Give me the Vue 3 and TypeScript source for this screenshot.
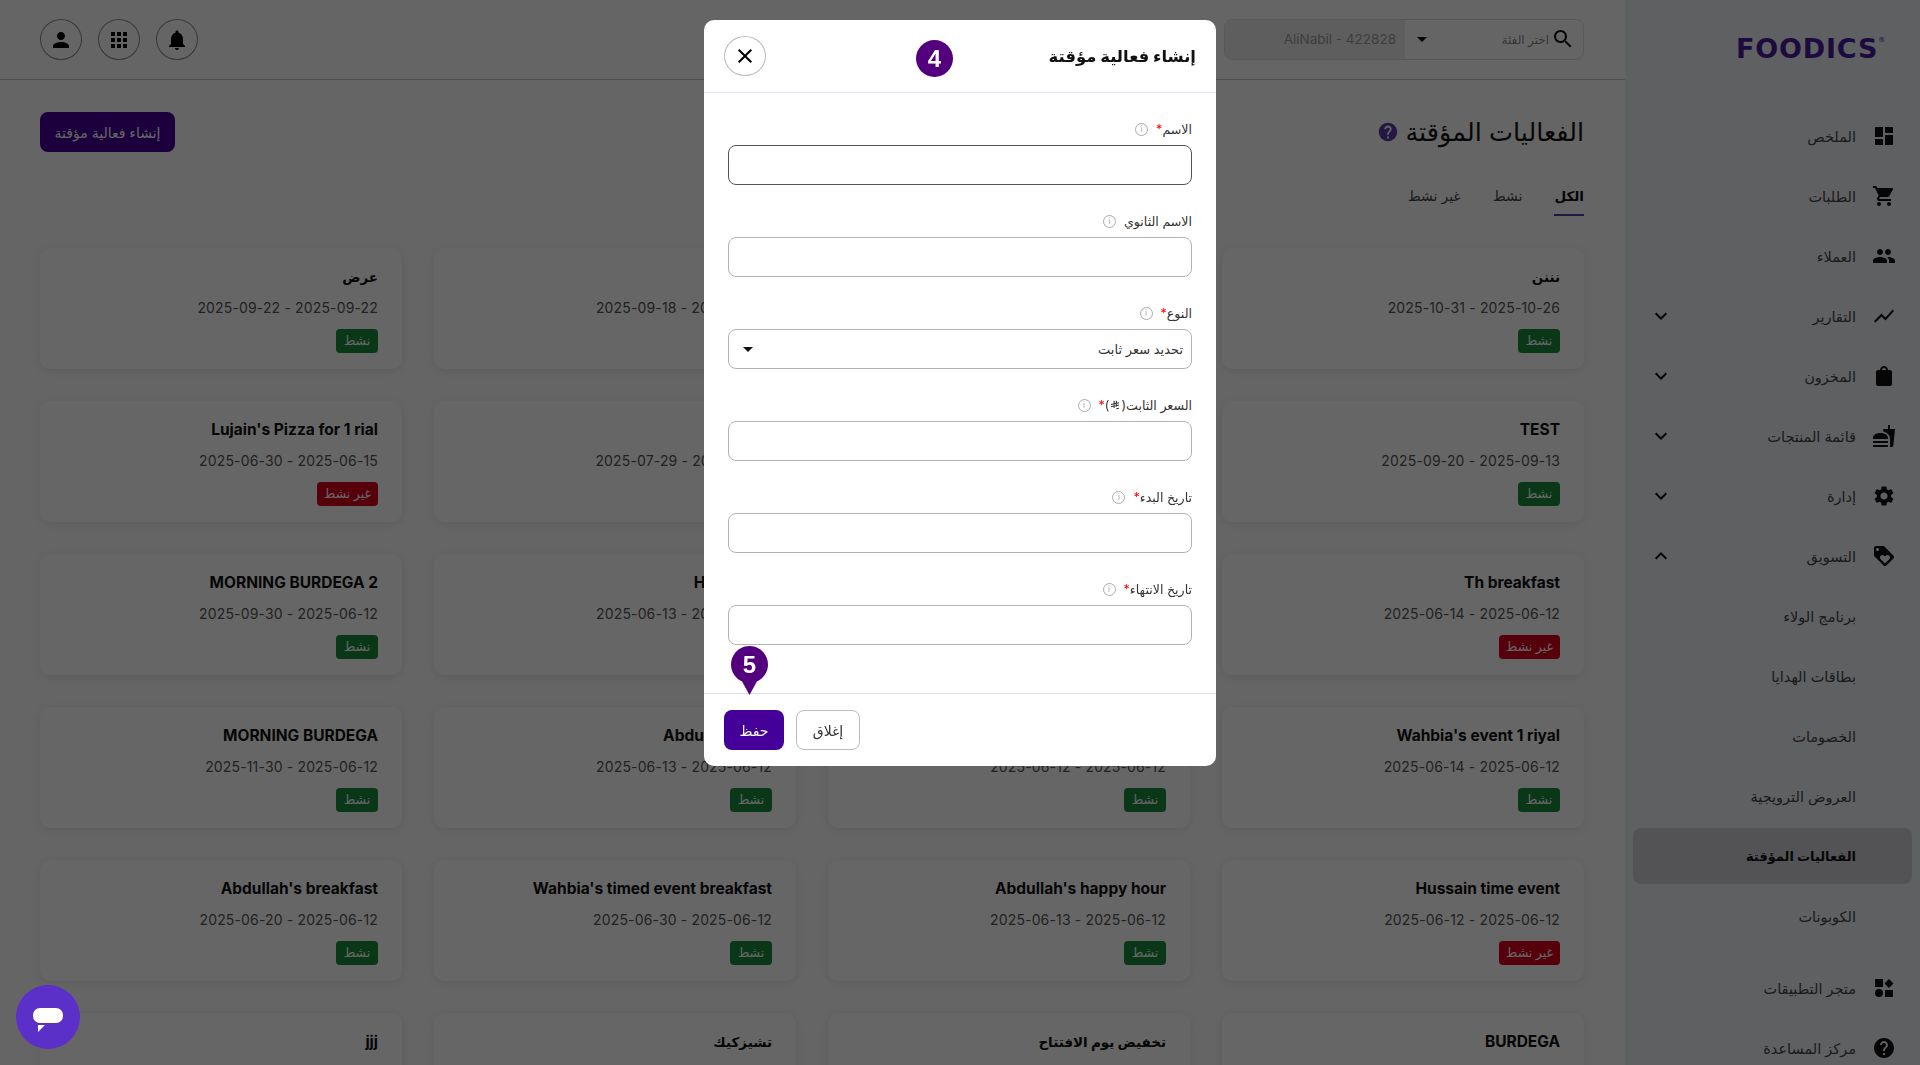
<template>
  <div class="page" dir="rtl">
    <aside class="sidebar">
      <div class="logo" dir="ltr">FOODICS<sup>®</sup></div>
      <nav class="nav">
        <div
          v-for="item in navItems"
          :key="item.label"
          class="nav-item"
          :class="{ active: item.active, 'after-group': item.afterGroup }"
        >
          <span class="nav-icon">
            <svg v-if="item.icon" viewBox="0 0 24 24" width="24" height="24"><path :d="icons[item.icon]" /></svg>
          </span>
          <span class="nav-label">{{ item.label }}</span>
          <svg v-if="item.chevron" class="chevron" viewBox="0 0 24 24" width="24" height="24">
            <path :d="item.chevron === 'up' ? icons.less : icons.more" />
          </svg>
        </div>
      </nav>
    </aside>

    <main class="main">
      <header class="topbar">
        <div class="branch-picker">
          <div class="branch-search">
            <svg viewBox="0 0 24 24" width="24" height="24"><path :d="icons.search" /></svg>
            <span class="branch-hint">اختر الفئة</span>
            <span class="caret"></span>
          </div>
          <div class="branch-value" dir="ltr">AliNabil - 422828</div>
        </div>
        <div class="top-actions">
          <button class="round-btn"><svg viewBox="0 0 24 24" width="24" height="24"><path :d="icons.bell" /></svg></button>
          <button class="round-btn"><svg viewBox="0 0 24 24" width="24" height="24"><path :d="icons.apps" /></svg></button>
          <button class="round-btn"><svg viewBox="0 0 24 24" width="24" height="24"><path :d="icons.person" /></svg></button>
        </div>
      </header>

      <section class="content">
        <div class="title-row">
          <h1>الفعاليات المؤقتة</h1>
          <svg class="title-help" viewBox="0 0 24 24" width="22" height="22"><path :d="icons.help" /></svg>
          <button class="create-btn">إنشاء فعالية مؤقتة</button>
        </div>

        <div class="tabs">
          <span class="tab current">الكل</span>
          <span class="tab">نشط</span>
          <span class="tab">غير نشط</span>
        </div>

        <div class="grid">
          <div v-for="(card, i) in cards" :key="i" class="card">
            <div class="card-title" :class="{ arabic: isArabic(card.title) }">{{ card.title }}</div>
            <div v-if="card.dates" class="card-dates">{{ card.dates }}</div>
            <span v-if="card.dates" class="badge" :class="{ off: !card.on }">{{ card.on ? 'نشط' : 'غير نشط' }}</span>
          </div>
        </div>
      </section>
    </main>

    <div class="overlay">
      <div class="modal">
        <div class="modal-header">
          <h3>إنشاء فعالية مؤقتة</h3>
          <button class="close-x"><svg viewBox="0 0 24 24" width="24" height="24"><path :d="icons.close" /></svg></button>
          <span class="step step-four">4</span>
        </div>

        <div class="modal-body">
          <div v-for="field in fields" :key="field.label" class="field">
            <div class="field-label">
              <span>{{ field.label }}</span>
              <svg v-if="field.riyal" class="riyal" viewBox="0 0 12 12" width="10" height="10">
                <path d="M5 1v8.5M7.6 .8v7.4M1.2 5.4l9.6-2M1.2 8l9.6-2M7.6 10.6l3.2-.7" />
              </svg>
              <span v-if="field.riyal">)</span>
              <span v-if="field.required" class="req">*</span>
              <span class="info">i</span>
            </div>
            <div class="input" :class="{ focused: field.focused }">
              <template v-if="field.value">
                <span>{{ field.value }}</span>
                <span class="caret"></span>
              </template>
            </div>
          </div>
        </div>

        <div class="modal-footer">
          <button class="btn-light">إغلاق</button>
          <button class="btn-save">حفظ</button>
        </div>

        <div class="step-pin">
          <svg viewBox="0 0 37 49" width="37" height="49"><path d="M18.5 0C8.3 0 0 8.3 0 18.5c0 7.600 4.600 14.100 11.100 17L18.500 49l7.400-13.500C32.400 32.600 37 26.100 37 18.500 37 8.300 28.700 0 18.500 0z" /></svg>
          <span>5</span>
        </div>
      </div>
    </div>

    <button class="chat-btn">
      <svg viewBox="0 0 32 32" width="32" height="32">
        <rect x="1" y="7" width="30" height="15" rx="7" fill="#fff" />
        <path d="M6 24h7l-7 7z" fill="#fff" />
      </svg>
    </button>
  </div>
</template>

<script setup lang="ts">
interface NavItem {
  label: string
  icon?: string
  chevron?: 'up' | 'down'
  active?: boolean
  afterGroup?: boolean
}

interface Card {
  title: string
  dates?: string
  on?: boolean
}

interface Field {
  label: string
  required?: boolean
  riyal?: boolean
  focused?: boolean
  value?: string
}

const icons: Record<string, string> = {
  dashboard: 'M3 13h8V3H3v10zm0 8h8v-6H3v6zm10 0h8V11h-8v10zm0-18v6h8V3h-8z',
  cart: 'M7 18c-1.1 0-1.99.9-1.99 2S5.9 22 7 22s2-.9 2-2-.9-2-2-2zM1 2v2h2l3.6 7.59-1.35 2.45c-.16.28-.25.61-.25.96 0 1.1.9 2 2 2h12v-2H7.42c-.14 0-.25-.11-.25-.25l.03-.12.9-1.63h7.45c.75 0 1.41-.41 1.75-1.03l3.58-6.49c.08-.14.12-.31.12-.48 0-.55-.45-1-1-1H5.21l-.94-2H1zm16 16c-1.1 0-1.99.9-1.99 2s.89 2 1.99 2 2-.9 2-2-.9-2-2-2z',
  people: 'M16 11c1.66 0 2.99-1.34 2.99-3S17.66 5 16 5c-1.66 0-3 1.34-3 3s1.34 3 3 3zm-8 0c1.66 0 2.99-1.34 2.99-3S9.66 5 8 5C6.34 5 5 6.34 5 8s1.34 3 3 3zm0 2c-2.33 0-7 1.17-7 3.5V19h14v-2.5c0-2.33-4.67-3.5-7-3.5zm8 0c-.29 0-.62.02-.97.05 1.16.84 1.97 1.97 1.97 3.45V19h6v-2.5c0-2.33-4.67-3.5-7-3.5z',
  chart: 'M3.5 18.49l6-6.01 4 4L22 6.92l-1.41-1.41-7.09 7.97-4-4L2 16.99z',
  bag: 'M18 6h-2c0-2.21-1.79-4-4-4S8 3.79 8 6H6c-1.1 0-2 .9-2 2v12c0 1.1.9 2 2 2h12c1.1 0 2-.9 2-2V8c0-1.1-.9-2-2-2zm-6-2c1.100 0 2 .9 2 2h-4c0-1.100.9-2 2-2z',
  food: 'M18.06 22.99h1.66c.84 0 1.53-.64 1.63-1.46L23 5.05h-5V1h-1.97v4.05h-4.97l.3 2.34c1.71.47 3.31 1.32 4.27 2.26 1.44 1.42 2.43 2.89 2.43 5.29v8.05zM1 21.99V21h15.03v.99c0 .55-.45 1-1.01 1H2.01c-.56 0-1.01-.45-1.01-1zm15.03-7c.5-4-3.25-6-7.53-6-4.28 0-8.03 2-7.53 6h15.06zM1.02 17h15v2h-15z',
  settings: 'M19.14 12.94c.04-.3.06-.61.06-.94 0-.32-.02-.64-.07-.94l2.03-1.58c.18-.14.23-.41.12-.61l-1.92-3.32c-.12-.22-.37-.29-.59-.22l-2.39.96c-.5-.38-1.03-.7-1.62-.94l-.36-2.54c-.04-.24-.24-.41-.48-.41h-3.84c-.24 0-.43.17-.47.41l-.36 2.54c-.59.24-1.13.57-1.62.94l-2.39-.96c-.22-.08-.47 0-.59.22L2.74 8.87c-.12.21-.08.47.12.61l2.03 1.58c-.05.3-.09.63-.09.94s.02.64.07.94l-2.03 1.58c-.18.14-.23.41-.12.61l1.92 3.32c.12.22.37.29.59.22l2.39-.96c.5.38 1.03.7 1.62.94l.36 2.54c.05.24.24.41.48.41h3.84c.24 0 .44-.17.47-.41l.36-2.54c.59-.24 1.13-.56 1.62-.94l2.39.96c.22.08.47 0 .59-.22l1.92-3.32c.12-.22.07-.47-.12-.61l-2.01-1.58zM12 15.6c-1.98 0-3.6-1.62-3.6-3.6s1.62-3.6 3.6-3.6 3.6 1.62 3.6 3.6-1.62 3.6-3.6 3.6z',
  tag: 'M21.41 11.58l-9-9C12.05 2.22 11.55 2 11 2H4c-1.1 0-2 .9-2 2v7c0 .55.22 1.05.59 1.42l9 9c.36.36.86.58 1.41.58.55 0 1.05-.22 1.41-.59l7-7c.37-.36.59-.86.59-1.41 0-.55-.23-1.06-.59-1.42zM5.5 7C4.67 7 4 6.33 4 5.5S4.67 4 5.5 4 7 4.67 7 5.5 6.33 7 5.5 7zm11.77 8.27L13 19.54l-4.27-4.27C8.28 14.81 8 14.19 8 13.5c0-1.38 1.12-2.5 2.5-2.5.69 0 1.32.28 1.77.74l.73.72.73-.73c.45-.45 1.08-.73 1.77-.73 1.38 0 2.5 1.12 2.5 2.5 0 .69-.28 1.32-.73 1.77z',
  store: 'M3 3h8v8H3zM17 3l4.500 4.500-4.500 4.500-4.500-4.500zM7 13a4 4 0 1 1 0 8 4 4 0 0 1 0-8zM13 14h8v7h-8z',
  help: 'M12 2C6.48 2 2 6.48 2 12s4.48 10 10 10 10-4.48 10-10S17.52 2 12 2zm1 17h-2v-2h2v2zm2.07-7.75l-.9.92C13.45 12.9 13 13.5 13 15h-2v-.5c0-1.1.45-2.1 1.17-2.83l1.24-1.26c.37-.36.59-.86.59-1.41 0-1.1-.9-2-2-2s-2 .9-2 2H8c0-2.21 1.79-4 4-4s4 1.79 4 4c0 .88-.36 1.68-.93 2.25z',
  person: 'M12 12c2.21 0 4-1.79 4-4s-1.79-4-4-4-4 1.79-4 4 1.79 4 4 4zm0 2c-2.67 0-8 1.34-8 4v2h16v-2c0-2.66-5.33-4-8-4z',
  apps: 'M4 8h4V4H4v4zm6 12h4v-4h-4v4zm-6 0h4v-4H4v4zm0-6h4v-4H4v4zm6 0h4v-4h-4v4zm6-10v4h4V4h-4zm-6 4h4V4h-4v4zm6 6h4v-4h-4v4zm0 6h4v-4h-4v4z',
  bell: 'M12 22c1.1 0 2-.9 2-2h-4c0 1.1.89 2 2 2zm6-6v-5c0-3.07-1.64-5.64-4.5-6.32V4c0-.83-.67-1.5-1.5-1.5s-1.5.67-1.5 1.5v.68C7.63 5.36 6 7.92 6 11v5l-2 2v1h16v-1l-2-2z',
  search: 'M15.5 14h-.79l-.28-.27C15.41 12.59 16 11.11 16 9.5 16 5.91 13.09 3 9.5 3S3 5.91 3 9.5 5.91 16 9.5 16c1.61 0 3.09-.59 4.23-1.57l.27.28v.79l5 4.99L20.49 19l-4.99-5zm-6 0C7.01 14 5 11.99 5 9.5S7.01 5 9.5 5 14 7.01 14 9.5 11.99 14 9.500 14z',
  more: 'M16.59 8.59L12 13.17 7.41 8.59 6 10l6 6 6-6z',
  less: 'M12 8l-6 6 1.41 1.41L12 10.83l4.59 4.58L18 14z',
  close: 'M19 6.41L17.59 5 12 10.59 6.41 5 5 6.41 10.59 12 5 17.59 6.41 19 12 13.41 17.59 19 19 17.59 13.41 12z'
}

const navItems: NavItem[] = [
  { label: 'الملخص', icon: 'dashboard' },
  { label: 'الطلبات', icon: 'cart' },
  { label: 'العملاء', icon: 'people' },
  { label: 'التقارير', icon: 'chart', chevron: 'down' },
  { label: 'المخزون', icon: 'bag', chevron: 'down' },
  { label: 'قائمة المنتجات', icon: 'food', chevron: 'down' },
  { label: 'إدارة', icon: 'settings', chevron: 'down' },
  { label: 'التسويق', icon: 'tag', chevron: 'up' },
  { label: 'برنامج الولاء' },
  { label: 'بطاقات الهدايا' },
  { label: 'الخصومات' },
  { label: 'العروض الترويجية' },
  { label: 'الفعاليات المؤقتة', active: true },
  { label: 'الكوبونات' },
  { label: 'متجر التطبيقات', icon: 'store', afterGroup: true },
  { label: 'مركز المساعدة', icon: 'help' }
]

// the third column and the titles near it sit behind the modal
const cards: Card[] = [
  { title: 'نننن', dates: '2025-10-31 - 2025-10-26', on: true },
  { title: '' },
  { title: '', dates: '2025-09-18 - 2025-09-18', on: true },
  { title: 'عرض', dates: '2025-09-22 - 2025-09-22', on: true },
  { title: 'TEST', dates: '2025-09-20 - 2025-09-13', on: true },
  { title: '' },
  { title: '', dates: '2025-07-29 - 2025-07-01', on: true },
  { title: "Lujain's Pizza for 1 rial", dates: '2025-06-30 - 2025-06-15', on: false },
  { title: 'Th breakfast', dates: '2025-06-14 - 2025-06-12', on: false },
  { title: '' },
  { title: 'Hot drinks', dates: '2025-06-13 - 2025-06-12', on: true },
  { title: 'MORNING BURDEGA 2', dates: '2025-09-30 - 2025-06-12', on: true },
  { title: "Wahbia's event 1 riyal", dates: '2025-06-14 - 2025-06-12', on: true },
  { title: '', dates: '2025-06-12 - 2025-06-12', on: true },
  { title: "Abdullah's tea", dates: '2025-06-13 - 2025-06-12', on: true },
  { title: 'MORNING BURDEGA', dates: '2025-11-30 - 2025-06-12', on: true },
  { title: 'Hussain time event', dates: '2025-06-12 - 2025-06-12', on: false },
  { title: "Abdullah's happy hour", dates: '2025-06-13 - 2025-06-12', on: true },
  { title: "Wahbia's timed event breakfast", dates: '2025-06-30 - 2025-06-12', on: true },
  { title: "Abdullah's breakfast", dates: '2025-06-20 - 2025-06-12', on: true },
  { title: 'BURDEGA' },
  { title: 'تخفيض يوم الافتتاح' },
  { title: 'تشيزكيك' },
  { title: 'jjj' }
]

const fields: Field[] = [
  { label: 'الاسم', required: true, focused: true },
  { label: 'الاسم الثانوي' },
  { label: 'النوع', required: true, value: 'تحديد سعر ثابت' },
  { label: 'السعر الثابت(', required: true, riyal: true },
  { label: 'تاريخ البدء', required: true },
  { label: 'تاريخ الانتهاء', required: true }
]

const isArabic = (text: string) => /[\u0600-\u06FF]/.test(text)
</script>

<style>
html,
body {
  margin: 0;
  overflow: hidden;
}
</style>

<style scoped>
* {
  box-sizing: border-box;
}

.page {
  display: flex;
  height: 1065px;
  overflow: hidden;
  background: #fdfdfd;
  font-family: "Inter", "DejaVu Sans", sans-serif;
  color: #111;
  font-size: 14px;
}

button {
  font-family: inherit;
  cursor: pointer;
}

.sidebar {
  flex: none;
  width: 295px;
  background: #eef0f5;
  padding: 0 8px;
}

.logo {
  height: 106px;
  padding: 29px 0 0 103px;
  font-family: "DejaVu Sans", sans-serif;
  font-size: 27px;
  font-weight: 700;
  line-height: 40px;
  letter-spacing: 0.8px;
  color: #4a1a9c;
}

.logo sup {
  font-size: 7px;
  line-height: 0;
  vertical-align: 16px;
  font-weight: 400;
}

.nav-item {
  display: flex;
  align-items: center;
  height: 60px;
  padding: 0 16px;
  color: #444;
  font-size: 14.5px;
}

.nav-item.after-group {
  margin-top: 12px;
}

.nav-item.active {
  height: 56px;
  margin: 2px 0;
  background: #d0d0d4;
  border-radius: 8px;
  font-size: 13px;
  font-weight: 700;
  color: #111;
}

.nav-icon {
  flex: none;
  width: 24px;
  height: 24px;
  margin-left: 16px;
}

.nav-icon svg,
.chevron {
  display: block;
  fill: #111;
}

.nav-label {
  flex: 1;
}

.chevron {
  flex: none;
}

.main {
  flex: 1;
  min-width: 0;
}

.topbar {
  display: flex;
  align-items: center;
  justify-content: space-between;
  height: 80px;
  padding: 0 41px 0 40px;
  border-bottom: 1px solid #c8c8c8;
}

.branch-picker {
  display: flex;
  width: 360px;
  height: 41px;
  margin-top: -1px;
  border: 1px solid #ddd;
  border-radius: 8px;
  overflow: hidden;
}

.branch-search {
  display: flex;
  align-items: center;
  flex: 1;
  padding: 0 8px 0 12px;
  gap: 2px;
}

.branch-search svg {
  flex: none;
  fill: #111;
}

.branch-hint {
  flex: 1;
  font-size: 12px;
  color: #888;
}

.caret {
  flex: none;
  width: 0;
  height: 0;
  border-left: 5px solid transparent;
  border-right: 5px solid transparent;
  border-top: 5px solid #111;
}

.branch-value {
  width: 180px;
  padding-right: 9px;
  background: #ececec;
  color: #999;
  font-size: 13.5px;
  line-height: 39px;
  text-align: right;
}

.top-actions {
  display: flex;
  gap: 16px;
}

.round-btn {
  display: flex;
  align-items: center;
  justify-content: center;
  width: 42px;
  height: 41px;
  padding: 0;
  background: none;
  border: 1px solid #888;
  border-radius: 50%;
}

.content {
  padding: 32px 41px 0 40px;
}

.title-row {
  display: flex;
  align-items: center;
  gap: 6px;
  height: 40px;
}

h1 {
  margin: 0;
  font-size: 25.5px;
  font-weight: 400;
  line-height: 40px;
}

.title-help {
  fill: #5a3ea8;
}

.create-btn {
  margin-right: auto;
  width: 135px;
  height: 40px;
  padding: 0;
  background: #45009a;
  border: none;
  border-radius: 8px;
  color: #fff;
  font-size: 14px;
}

.tabs {
  display: flex;
  gap: 32px;
  height: 40px;
  margin: 24px 0 32px;
}

.tab {
  line-height: 40px;
  color: #444;
  font-size: 14px;
}

.tab.current {
  border-bottom: 2px solid #5a3ea8;
  font-size: 13.5px;
  font-weight: 700;
  color: #111;
}

.grid {
  display: grid;
  grid-template-columns: repeat(4, 362px);
  gap: 32px;
}

.card {
  display: flex;
  flex-direction: column;
  align-items: flex-start;
  gap: 11px;
  height: 121px;
  padding: 19px 24px 16px;
  background: #fff;
  border-radius: 10px;
  box-shadow: 0 2px 10px rgba(0, 0, 0, 0.1);
}

.card-title {
  min-height: 20px;
  font-size: 15.5px;
  font-weight: 700;
  line-height: 20px;
  white-space: nowrap;
}

.card-title.arabic {
  font-size: 13.5px;
}

.card-dates {
  color: #555;
  line-height: 20px;
  letter-spacing: 0.15px;
  direction: ltr;
}

.badge {
  min-width: 42px;
  height: 24px;
  padding: 0 7px;
  background: #1b8a3c;
  border-radius: 4px;
  color: #fff;
  font-size: 12.5px;
  line-height: 24px;
  text-align: center;
}

.badge.off {
  background: #d8001c;
}

.overlay {
  position: fixed;
  inset: 0;
  display: flex;
  justify-content: center;
  align-items: flex-start;
  padding-top: 20px;
  background: rgba(0, 0, 0, 0.6);
  z-index: 10;
}

.modal {
  position: relative;
  display: flex;
  flex-direction: column;
  width: 512px;
  height: 746px;
  background: #fff;
  border-radius: 10px;
}

.modal-header {
  position: relative;
  display: flex;
  align-items: center;
  justify-content: space-between;
  flex: none;
  height: 73px;
  padding: 0 20px;
  border-bottom: 1px solid #dde2ee;
}

.modal-header h3 {
  margin: 0;
  font-size: 16.4px;
  font-weight: 700;
}

.close-x {
  display: flex;
  align-items: center;
  justify-content: center;
  width: 42px;
  height: 40px;
  padding: 0;
  background: #fff;
  border: 1px solid #bbb;
  border-radius: 50%;
}

.step {
  display: flex;
  align-items: center;
  justify-content: center;
  font-family: "Liberation Sans", sans-serif;
  color: #fff;
  font-weight: 700;
}

.step-four {
  position: absolute;
  left: 212px;
  top: 20px;
  width: 37px;
  height: 37px;
  background: #54007e;
  border-radius: 50%;
  font-size: 24px;
}

.modal-body {
  flex: 1;
  padding: 26px 24px 0;
}

.field {
  margin-bottom: 26px;
}

.field-label {
  display: flex;
  align-items: center;
  height: 20px;
  margin-bottom: 6px;
  color: #333;
  font-size: 12.6px;
}

.req {
  color: #f00;
}

.riyal {
  margin: 0 1px;
  fill: none;
  stroke: #333;
  stroke-width: 1.3;
}

.info {
  display: flex;
  align-items: center;
  justify-content: center;
  width: 13px;
  height: 13px;
  margin-right: 8px;
  border: 1px solid #aaa;
  border-radius: 50%;
  color: #aaa;
  font-size: 9px;
  font-family: "Liberation Sans", sans-serif;
}

.input {
  display: flex;
  align-items: center;
  justify-content: space-between;
  height: 40px;
  padding: 0 8px 0 14px;
  border: 1px solid #b4b4b4;
  border-radius: 8px;
  font-size: 13px;
  color: #333;
}

.input.focused {
  border-color: #555;
}

.modal-footer {
  display: flex;
  justify-content: flex-end;
  gap: 12px;
  flex: none;
  padding: 16px 20px;
  border-top: 1px solid #dcdce4;
}

.btn-light,
.btn-save {
  height: 40px;
  padding: 0;
  border-radius: 8px;
  font-size: 14px;
}

.btn-light {
  width: 64px;
  background: #fff;
  border: 1px solid #bbb;
  color: #333;
}

.btn-save {
  width: 60px;
  background: #45009a;
  border: none;
  color: #fff;
}

.step-pin {
  position: absolute;
  left: 27px;
  top: 626px;
  width: 37px;
  height: 49px;
}

.step-pin svg {
  display: block;
  fill: #54007e;
}

.step-pin span {
  position: absolute;
  top: 0;
  left: 0;
  width: 37px;
  text-align: center;
  font-family: "Liberation Sans", sans-serif;
  font-size: 24px;
  font-weight: 700;
  line-height: 37px;
  color: #fff;
}

.chat-btn {
  position: fixed;
  left: 16px;
  top: 985px;
  display: flex;
  align-items: center;
  justify-content: center;
  width: 64px;
  height: 64px;
  padding: 0;
  background: #5a30c8;
  border: none;
  border-radius: 50%;
  z-index: 20;
}
</style>
